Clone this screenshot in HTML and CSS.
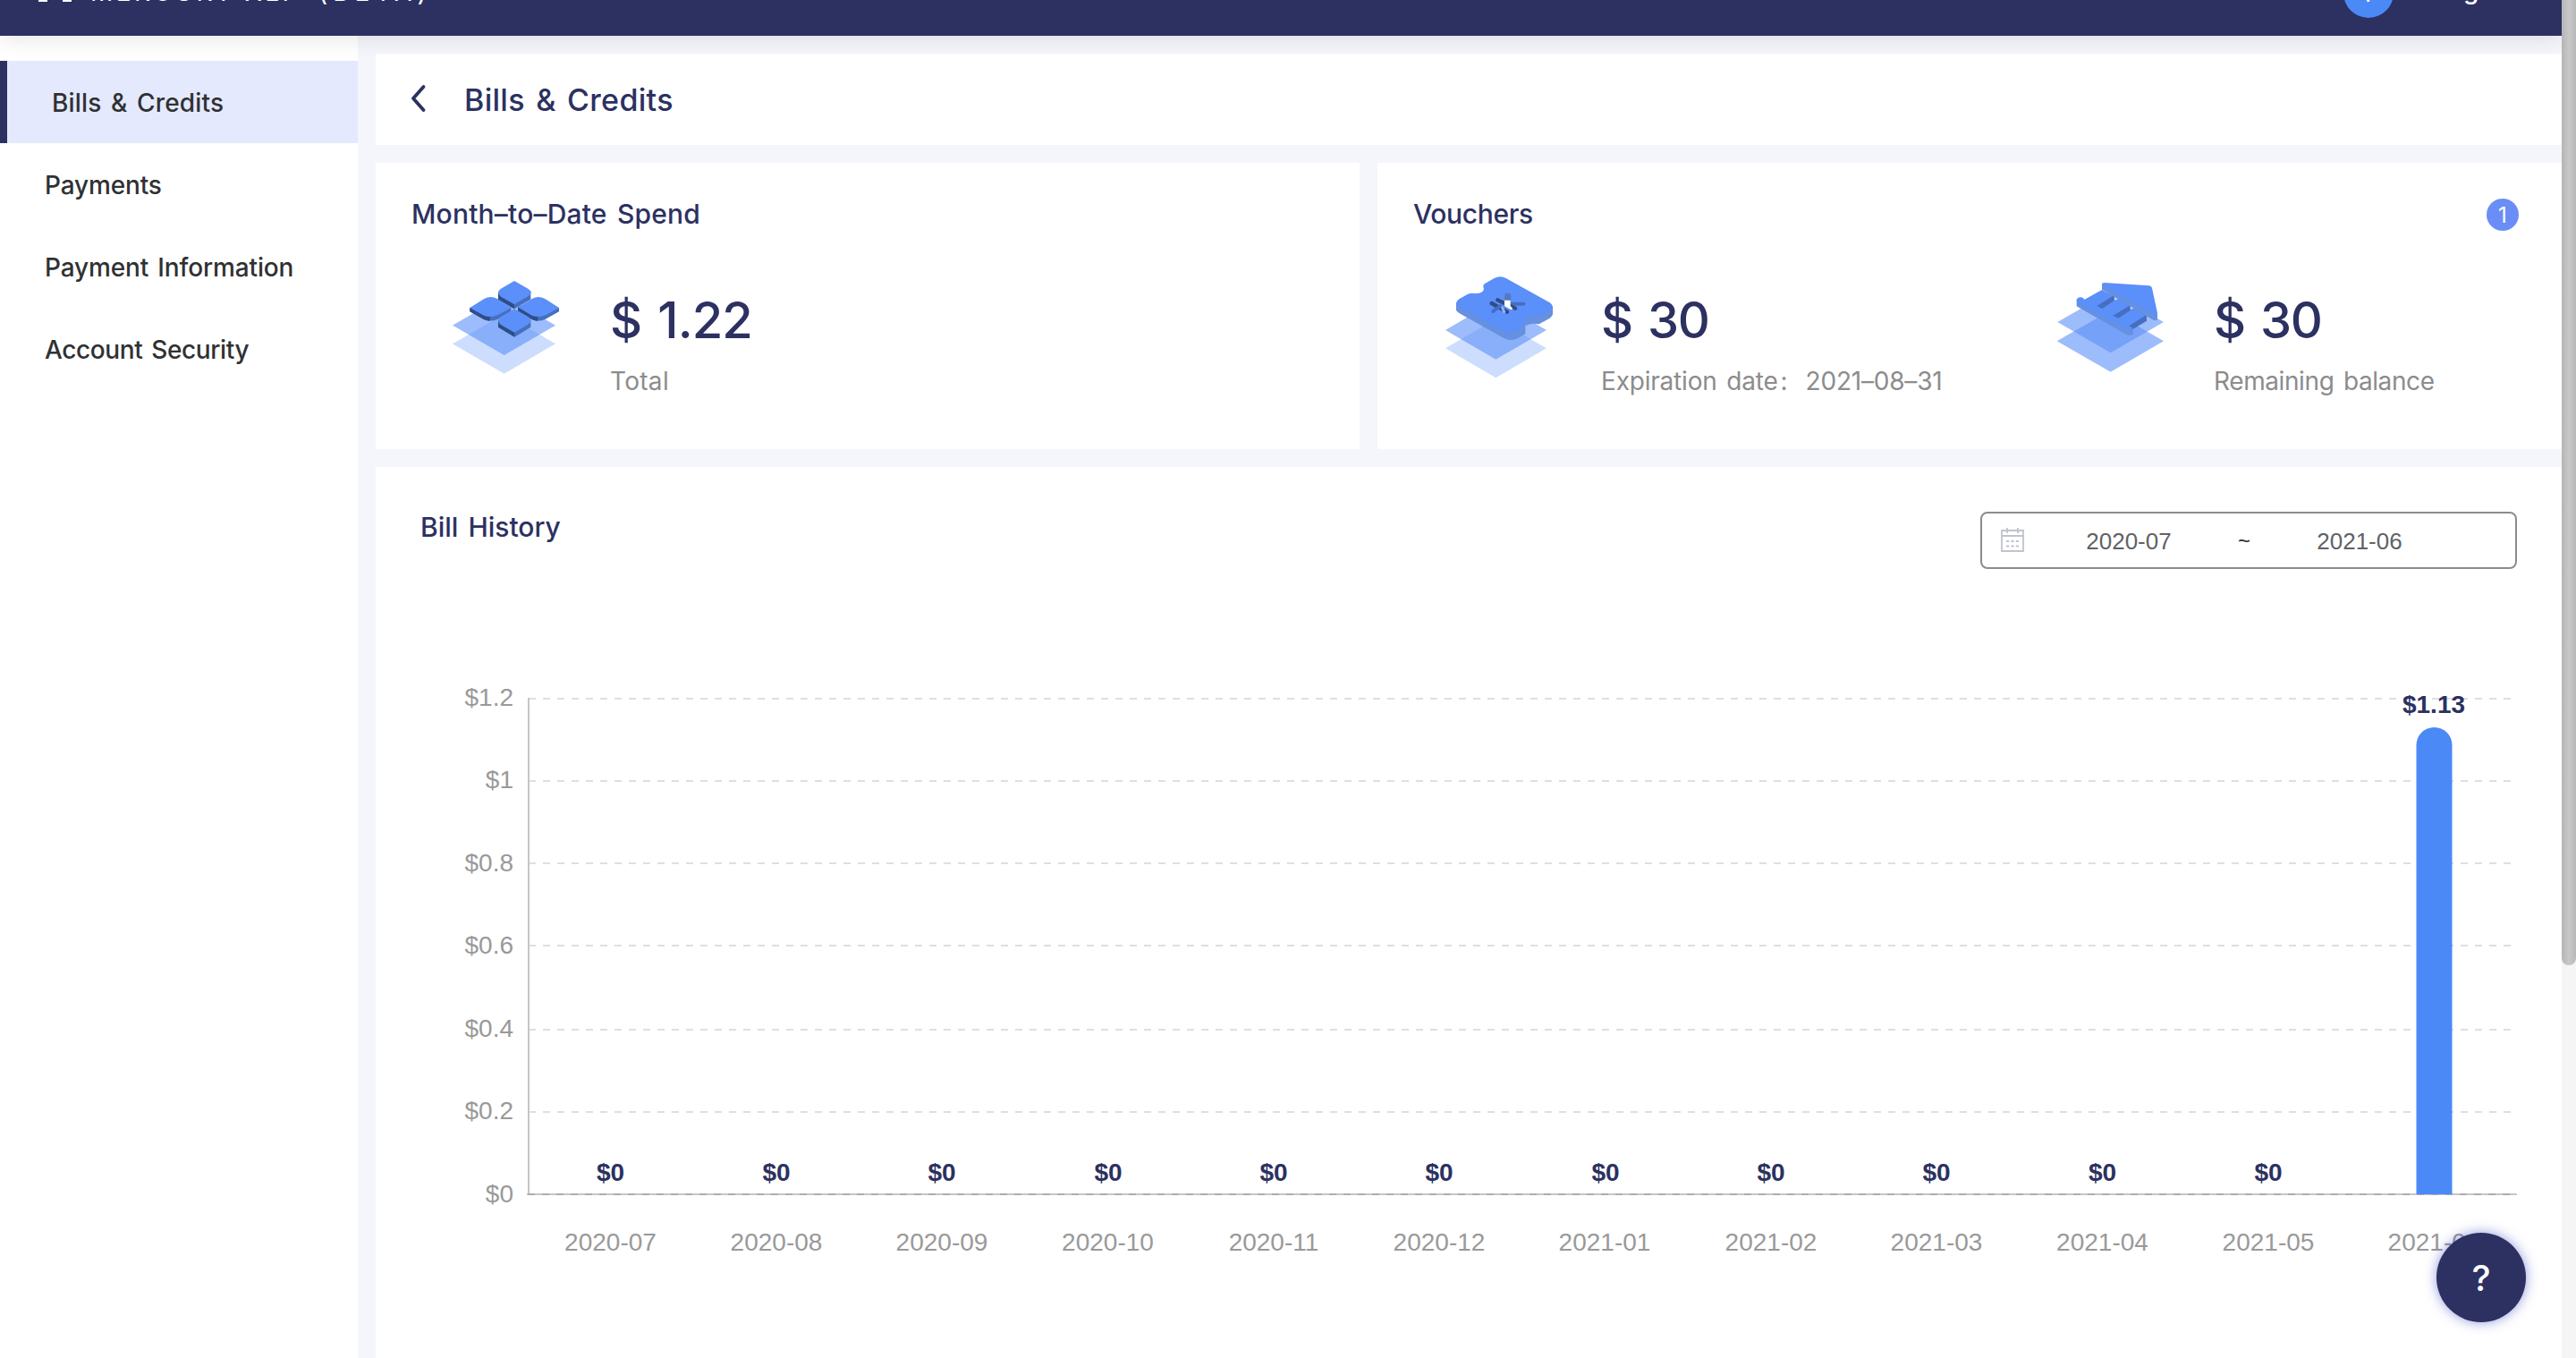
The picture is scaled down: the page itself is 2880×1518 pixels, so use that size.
FILE: index.html
```html
<!DOCTYPE html>
<html lang="en">
<head>
<meta charset="utf-8">
<title>Bills &amp; Credits</title>
<link rel="stylesheet" href="styles.css">
</head>
<body>
<div class="page">
  <header class="topbar">
    <div class="topbar-inner">
      <svg class="logo" viewBox="0 0 38 38"><path d="M0 0H10V38H0zM27 0H37V38H27zM0 8H37V18H0z" fill="#fff"/></svg>
      <span class="brand">MERCURY XLP</span>
      <span class="beta">(BETA)</span>
      <span class="avatar">Y</span>
      <span class="user">Yang</span>
    </div>
  </header>
  <div class="body">
    <nav class="sidebar">
      <a class="nav-item active">Bills &amp; Credits</a>
      <a class="nav-item">Payments</a>
      <a class="nav-item info">Payment Information</a>
      <a class="nav-item security">Account Security</a>
    </nav>
    <main class="main">
      <section class="card page-head">
        <svg class="back" viewBox="0 0 20 32"><path d="M15.500 3L4 16L15.500 29" fill="none" stroke="#2c3161" stroke-width="3.8" stroke-linecap="round" stroke-linejoin="round"/></svg>
        <h1>Bills &amp; Credits</h1>
      </section>
      <div class="summary">
        <section class="card spend">
          <h2 class="spend-title">Month–to–Date Spend</h2>
          <div class="stat">
            <svg class="icon-spend" viewBox="249 330 378 336">
              <path d="M258 553L431 453L603 553L431 653z" fill="#5b8ff9" opacity=".3"/>
              <path d="M258 491L431 391L603 491L431 591z" fill="#5b8ff9" opacity=".6"/>
              <path d="M411 380V404L465 436L520 404V380z" fill="#466fc0"/><path d="M411 380V404L465 436V420z" fill="#2f4d86"/>
              <path d="M465 342L511 368Q532 381 511 394L465 421L420 395Q402 381 420 368z" fill="#5b8ff9"/>
              <path d="M316 432V445L364 472Q386 480 408 471L454 445V430z" fill="#466fc0"/><path d="M316 432V445L364 472Q376 477 384 476V450z" fill="#2f4d86"/>
              <path d="M316 432L363 403Q385 389 408 402L455 432L409 457Q386 467 363 458z" fill="#5b8ff9"/>
              <path d="M477 430V443L524 471Q546 480 568 471L615 445V432z" fill="#466fc0"/><path d="M477 430V443L524 471Q536 477 544 476V450z" fill="#2f4d86"/>
              <path d="M477 430L523 403Q545 389 568 402L615 432L570 457Q547 467 524 458z" fill="#5b8ff9"/>
              <path d="M411 474V497L466 530L520 497V474z" fill="#466fc0"/><path d="M411 474V497L466 530V510z" fill="#2f4d86"/>
              <path d="M465 436L511 462Q532 475 511 488L465 515L420 489Q402 475 420 462z" fill="#5b8ff9"/>
            </svg>
            <div class="figures">
              <div class="amount">$ 1.22</div>
              <div class="caption total">Total</div>
            </div>
          </div>
        </section>
        <section class="card vouchers">
          <div class="card-head"><h2 class="vouchers-title">Vouchers</h2><span class="badge">1</span></div>
          <div class="stats">
            <div class="stat voucher">
              <svg class="icon-voucher" viewBox="0 0 450 390">
                <path d="M48 268L217 170L387 268L217 367z" fill="#5b8ff9" opacity=".3"/>
                <path d="M48 207L217 108L387 207L217 305z" fill="#5b8ff9" opacity=".6"/>
                <path d="M84 114V140Q88 147 98 152L244 234Q264 245 287 236L316 220V192Q340 182 362 187L398 167Q408 160 408 153V126z" fill="#6690e0"/>
                <path d="M212 33Q232 22 251 33L398 115Q416 127 398 139L371 155Q362 161 350 162Q316 158 315 178Q316 186 308 192L287 208Q264 224 243 211L96 129Q75 115 94 103L122 87Q132 82 145 84Q176 85 177 68Q172 58 179 52z" fill="#5b8ff9"/>
                <g fill="none" stroke-linecap="round">
                  <path d="M257 93V115" stroke="#5379c4" stroke-width="21"/>
                  <path d="M270 119H310" stroke="#466fc0" stroke-width="12"/>
                  <path d="M223 106L282 134M203 117L255 146" stroke="#2f4d86" stroke-width="13"/>
                  <path d="M208 144L232 126" stroke="#416ec8" stroke-width="12"/>
                  <path d="M239 132L245 146" stroke="#8fb1fb" stroke-width="9"/>
                </g>
                <path d="M246 107H266V126L274 136L268 139L246 126z" fill="#fff"/>
              </svg>
              <div class="figures">
                <div class="amount">$ 30</div>
                <div class="caption expiry">Expiration date<span class="colon">:</span>2021–08–31</div>
              </div>
            </div>
            <div class="stat balance">
              <svg class="icon-balance" viewBox="0 0 450 390">
                <path d="M29 244L209 141L387 244L209 347z" fill="#5b8ff9" opacity=".6"/>
                <path d="M31 180L209 78L387 180L209 283z" fill="#5b8ff9" opacity=".6"/>
                <path d="M95 104V127L262 222Q275 227 285 220V198z" fill="#6690e0"/>
                <path d="M95 106Q98 94 113 97L122 104L180 72L330 156L328 166L275 195L285 200Q286 209 264 204L97 114z" fill="#5b8ff9"/>
                <path d="M163 126L221 90V108L181 135zM217 158L275 124V141L235 167zM272 192L330 155V176L285 203z" fill="#466fc0"/>
                <path d="M222 91L238 101L222 107zM275 124L290 132L276 138z" fill="#c4d5fc"/>
                <path d="M180 50V71L350 172Q358 178 366 172V151z" fill="#6690e0"/>
                <path d="M180 54Q180 48 188 48L338 58Q346 59 348 66L366 150Q364 157 352 153L183 58z" fill="#5b8ff9"/>
              </svg>
              <div class="figures">
                <div class="amount">$ 30</div>
                <div class="caption remaining">Remaining balance</div>
              </div>
            </div>
          </div>
        </section>
      </div>
      <section class="card history">
        <div class="history-head">
          <h2 class="history-title">Bill History</h2>
          <div class="range">
            <svg class="calendar" viewBox="0 0 26 28" fill="none" stroke="#c0c4cc" stroke-width="1.8"><path d="M1 4H25V27H1zM1 10H25M7 1V7M19 1V7"/><path d="M6 16H20M6 21.500H20" stroke-dasharray="3.200 2.200"/></svg>
            <span class="date">2020-07</span><span class="tilde">~</span><span class="date">2021-06</span>
          </div>
        </div>
        <svg class="chart" viewBox="420 740 2444 778">
          <g class="grid">
            <path d="M591 781H2810M591 873H2810M591 965H2810M591 1057H2810M591 1151H2810M591 1243H2810"/>
          </g>
          <path class="axis" d="M591 780V1335M589 1335H2814"/>
          <path class="base" d="M590 1335H2810"/>
          <path d="M2701.500 1335V833A20 20 0 0 1 2741.500 833V1335z" fill="#4b89f7"/>
          <g class="ylabels">
            <text x="574" y="789">$1.2</text><text x="574" y="881">$1</text><text x="574" y="974">$0.8</text><text x="574" y="1066">$0.6</text><text x="574" y="1159">$0.4</text><text x="574" y="1251">$0.2</text><text x="574" y="1344">$0</text>
          </g>
          <g class="xlabels">
            <text x="682.500" y="1398">2020-07</text><text x="868" y="1398">2020-08</text><text x="1053" y="1398">2020-09</text><text x="1238.500" y="1398">2020-10</text><text x="1424" y="1398">2020-11</text><text x="1609" y="1398">2020-12</text><text x="1794" y="1398">2021-01</text><text x="1980" y="1398">2021-02</text><text x="2165" y="1398">2021-03</text><text x="2350.500" y="1398">2021-04</text><text x="2536" y="1398">2021-05</text><text x="2721" y="1398">2021-06</text>
          </g>
          <g class="values">
            <text x="682.500" y="1320">$0</text><text x="868" y="1320">$0</text><text x="1053" y="1320">$0</text><text x="1239" y="1320">$0</text><text x="1424" y="1320">$0</text><text x="1609" y="1320">$0</text><text x="1795" y="1320">$0</text><text x="1980" y="1320">$0</text><text x="2165" y="1320">$0</text><text x="2350.500" y="1320">$0</text><text x="2536" y="1320">$0</text><text x="2721" y="797">$1.13</text>
          </g>
        </svg>
      </section>
    </main>
    <div class="scroll-track"><div class="scroll-thumb"></div></div>
  </div>
  <button class="help">?</button>
</div>
</body>
</html>
```
FILE: styles.css
```css
* { box-sizing: border-box; }
body { margin: 0; font-family: Inter, "Noto Sans CJK SC", sans-serif; color: #303133; }
h1, h2 { margin: 0; font-weight: 500; color: #2c3161; white-space: nowrap; }
.page { position: relative; width: 2880px; height: 1518px; overflow: hidden; background: #f5f6fc; }
.topbar { position: relative; z-index: 1; width: 2864px; height: 40px; background: #2c3161; }
.topbar::after { content: ""; position: absolute; inset: 0; clip-path: inset(40px 0 -40px 0); box-shadow: 0 4px 24px rgba(0,0,0,.1); }
.topbar-inner { display: flex; align-items: center; height: 96px; margin-top: 0; transform: translateY(-56px); padding-left: 43px; color: #fff; font-size: 28px; letter-spacing: 1px; clip-path: inset(56px 0 0 0); }
.logo { width: 38px; height: 38px; margin-top: -18px; }
.brand { margin-left: 20px; width: 255px; white-space: nowrap; letter-spacing: 3.4px; margin-top: -2px; }
.beta { letter-spacing: 6px; margin-top: -2px; }
.avatar { display: flex; align-items: center; justify-content: center; width: 56px; height: 56px; margin-left: auto; border-radius: 50%; background: #4b89f7; font-size: 28px; }
.user { width: 174px; padding-left: 25px; margin-right: 14px; margin-top: -6px; font-weight: 500; }
.body { display: flex; height: 1478px; }
.sidebar { width: 400px; padding-top: 28px; background: #fff; }
.nav-item { display: flex; align-items: center; height: 92px; padding: 1px 0 0 50px; font-size: 28px; font-weight: 500; letter-spacing: -.15px; word-spacing: 3px; white-space: nowrap; }
.nav-item.active { border-left: 8px solid #2c3161; background: #e4e9fd; letter-spacing: .15px; }
.nav-item.info { letter-spacing: -.15px; }
.nav-item.security { letter-spacing: -.4px; }
.main { display: flex; flex-direction: column; gap: 20px; width: 2464px; padding: 20px 0 0 20px; }
.card { background: #fff; }
.page-head { display: flex; align-items: center; height: 102px; padding-left: 38px; }
.back { width: 20px; height: 32px; margin-top: -2px; }
h1 { margin: 2px 0 0 41px; font-size: 34px; line-height: 48px; letter-spacing: .3px; word-spacing: 3px; }
.summary { display: flex; gap: 20px; height: 320px; }
.spend { width: 1100px; padding: 36px 40px; }
h2 { position: relative; top: -1px; font-size: 30px; line-height: 44px; }
.spend-title { letter-spacing: .2px; word-spacing: 3px; }
.vouchers-title { letter-spacing: -.35px; }
.vouchers { width: 1324px; padding: 36px 48px 0 40px; }
.card-head { display: flex; justify-content: space-between; align-items: center; height: 44px; }
.badge { display: flex; align-items: center; justify-content: center; width: 36px; height: 36px; border-radius: 50%; background: #6a8ef5; color: #fff; font-size: 24px; }
.stat { display: flex; }
.icon-spend { width: 126px; height: 112px; margin: 48px 0 0 43px; }
.figures { padding-top: 66px; white-space: nowrap; }
.spend .figures { margin-left: 53px; }
.amount { height: 60px; line-height: 60px; font-size: 56px; font-weight: 500; color: #2c3161; letter-spacing: -1.5px; word-spacing: 4px; }
.spend .amount { letter-spacing: -.9px; }
.caption { margin-top: 18px; font-size: 28px; line-height: 40px; color: #8c8c8c; }
.total { letter-spacing: .3px; }
.expiry { letter-spacing: -.2px; word-spacing: 3px; }
.remaining { letter-spacing: -.4px; word-spacing: 3px; }
.colon { display: inline-block; width: 31px; padding-left: 3px; }
.stats { display: flex; }
.voucher { width: 690px; padding-left: 20px; }
.icon-voucher, .icon-balance { flex: none; width: 150px; height: 130px; margin-top: 38px; }
.balance .icon-balance { margin-left: 20px; }
.voucher .figures { margin-left: 40px; }
.balance .figures { margin-left: 35px; }
.history { height: 996px; }
.history-head { display: flex; justify-content: space-between; height: 218px; padding: 0 50px; }
.history-title { margin-top: 46px; word-spacing: 3px; }
.range { display: flex; align-items: center; width: 600px; height: 64px; margin-top: 50px; padding: 2px 0 0 21px; border: 2px solid #8c8c8c; border-radius: 8px; font: 26px "Liberation Sans", sans-serif; color: #606266; }
.calendar { width: 26px; height: 28px; margin: -4px 2px 0 0; }
.date { width: 230px; text-align: center; }
.tilde { width: 28px; text-align: center; color: #303133; font-size: 24px; }
.chart { display: block; width: 2444px; height: 778px; font: 28px "Liberation Sans", sans-serif; }
.grid { stroke: #e0dede; stroke-width: 2; stroke-dasharray: 8 8; }
.axis { fill: none; stroke: #c6c6c6; stroke-width: 2; }
.base { stroke: #adadad; stroke-width: 2; stroke-dasharray: 8 8; }
.ylabels { fill: #999; text-anchor: end; }
.xlabels { fill: #999; text-anchor: middle; }
.values { fill: #2c3161; font-weight: 700; text-anchor: middle; }
.scroll-track { width: 16px; height: 1518px; margin-top: -40px; background: #f5f5f5; }
.scroll-thumb { height: 1079px; border-radius: 0 0 8px 8px; background: linear-gradient(90deg, #b5b5b5, #c8c8c8 50%, #b8b8b8); }
.help { position: absolute; left: 2724px; top: 1378px; width: 100px; height: 100px; padding: 0; border: 0; border-radius: 50%; background: #2c3161; box-shadow: 0 0 14px rgba(74,84,200,.6); color: #fff; font: 500 40px Inter, sans-serif; }
```
